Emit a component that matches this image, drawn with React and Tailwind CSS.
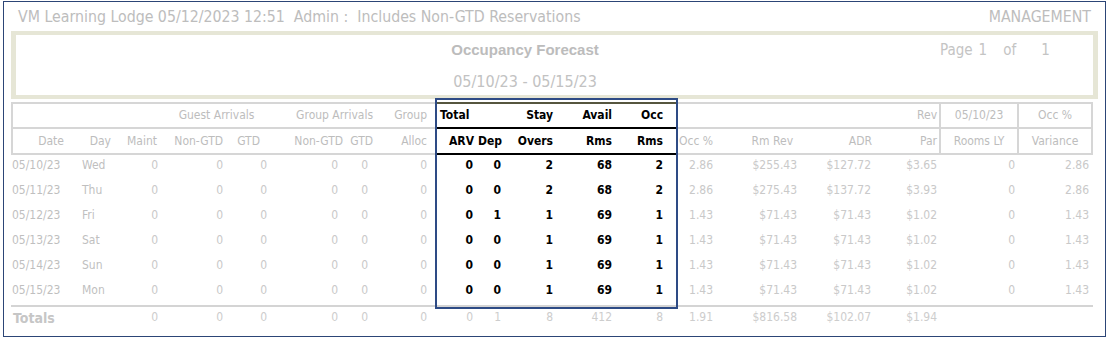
import React from 'react';

const cols = [61, 43, 47, 65, 44, 76, 30, 58, 42, 28, 53, 58, 62, 39, 83, 76, 63, 80, 74];

const rows = [
  ['05/10/23', 'Wed', 0, 0, 0, 0, 0, 0, 0, 0, 2, 68, 2, '2.86', '$255.43', '$127.72', '$3.65', 0, '2.86'],
  ['05/11/23', 'Thu', 0, 0, 0, 0, 0, 0, 0, 0, 2, 68, 2, '2.86', '$275.43', '$137.72', '$3.93', 0, '2.86'],
  ['05/12/23', 'Fri', 0, 0, 0, 0, 0, 0, 0, 1, 1, 69, 1, '1.43', '$71.43', '$71.43', '$1.02', 0, '1.43'],
  ['05/13/23', 'Sat', 0, 0, 0, 0, 0, 0, 0, 0, 1, 69, 1, '1.43', '$71.43', '$71.43', '$1.02', 0, '1.43'],
  ['05/14/23', 'Sun', 0, 0, 0, 0, 0, 0, 0, 0, 1, 69, 1, '1.43', '$71.43', '$71.43', '$1.02', 0, '1.43'],
  ['05/15/23', 'Mon', 0, 0, 0, 0, 0, 0, 0, 0, 1, 69, 1, '1.43', '$71.43', '$71.43', '$1.02', 0, '1.43'],
];

const totals = ['Totals', '', 0, 0, 0, 0, 0, 0, 0, 1, 8, 412, 8, '1.91', '$816.58', '$102.07', '$1.94', '', ''];

// padding per column for data cells
const dataPad = [
  'text-left pl-[1px]', 'text-left pl-[10px]', 'text-right pr-[4px]', 'text-right pr-[4px]', 'text-right pr-[4px]',
  'text-right pr-[9px]', 'text-right pr-[9px]', 'text-right pr-[8px]', 'text-right pr-[4px]', 'text-right pr-[4px]',
  'text-right pr-[5px]', 'text-right pr-[4px]', 'text-right pr-[15px]', 'text-right pr-[4px]', 'text-right pr-[3px]',
  'text-right pr-[5px]', 'text-right pr-[2px]', 'text-right pr-[4px]', 'text-right pr-[4px]',
];

const inBox = (i) => i >= 8 && i <= 12;

const h2 = [
  ['Date', 'text-right pr-[8px] border-l-2'],
  ['Day', 'text-right pr-[4px]'],
  ['Maint', 'text-right pr-[5px]'],
  ['Non-GTD', 'text-right pr-[4px]'],
  ['GTD', 'text-right pr-[11px]'],
  ['Non-GTD', 'text-right pr-[4px]'],
  ['GTD', 'text-right pr-[4px]'],
  ['Alloc', 'text-right pr-[8px]'],
  ['ARV', 'text-right pr-[3px]'],
  ['Dep', 'text-left pl-[1px]'],
  ['Overs', 'text-right pr-[5px]'],
  ['Rms', 'text-right pr-[4px]'],
  ['Rms', 'text-right pr-[15px]'],
  ['Occ %', 'text-right pr-[4px]'],
  ['Rm Rev', 'text-right pr-[7px]'],
  ['ADR', 'text-right pr-[4px]'],
  ['Par', 'text-right pr-[2px]'],
  ['Rooms LY', 'text-center border-x-2'],
  ['Variance', 'text-center border-r-2'],
];

const App = () => {
  return (
    <div className="ml-[3px] mt-[1px] w-[1103px] h-[336px] border border-[#2c4576] bg-white font-['DejaVu_Sans_Condensed','DejaVu_Sans',sans-serif] text-[#bdbdbd]">
      {/* Top line */}
      <div className="h-[29px] flex items-center justify-between pl-[14px] pr-[14px] text-[15.75px]">
        <span className="whitespace-pre">VM Learning Lodge 05/12/2023 12:51  Admin :  Includes Non-GTD Reservations</span>
        <span>MANAGEMENT</span>
      </div>

      {/* Report title box */}
      <div className="ml-[7px] w-[1087px] h-[68px] border-y-4 border-x-[5px] border-[#e6e6d6] flex">
        <div className="ml-[359px] w-[300px] flex flex-col items-center">
          <div className="mt-[6px] leading-[18px] text-[15px] font-bold font-['Liberation_Sans',Arial,sans-serif] text-[#bcbcbc]">
            Occupancy Forecast
          </div>
          <div className="mt-[13px] leading-[20px] text-[16px] text-[#c2c2c2]">05/10/23 - 05/15/23</div>
        </div>
        <div className="ml-[265px] mt-[6px] leading-[18px] text-[15px] flex text-[#c4c4c4]">
          <span>Page</span>
          <span className="ml-[6px]">1</span>
          <span className="ml-[16px]">of</span>
          <span className="ml-[25px]">1</span>
        </div>
      </div>

      {/* Table */}
      <div className="relative ml-[7px] mt-[3px] w-[1082px]">
        <table className="table-fixed border-separate border-spacing-0 w-[1082px] text-[12px] leading-[15px]">
          <colgroup>
            {cols.map((w, i) => (
              <col key={i} style={{ width: w }} />
            ))}
          </colgroup>
          <thead>
            <tr className="h-[27px]">
              <th colSpan={3} className="border-y-2 border-l-2 border-[#d6d6d6]" />
              <th colSpan={2} className="border-y-2 border-[#d6d6d6] font-normal text-center">Guest Arrivals</th>
              <th colSpan={2} className="border-y-2 border-[#d6d6d6] font-normal text-right pr-[4px]">Group Arrivals</th>
              <th className="border-y-2 border-[#d6d6d6] font-normal text-right pr-[8px]">Group</th>
              <th colSpan={2} className="border-t-2 border-t-[#56563f] border-b-2 border-b-black font-bold text-black text-left pl-[5px]">Total</th>
              <th className="border-t-2 border-t-[#56563f] border-b-2 border-b-black font-bold text-black text-right pr-[5px]">Stay</th>
              <th className="border-t-2 border-t-[#56563f] border-b-2 border-b-black font-bold text-black text-right pr-[4px]">Avail</th>
              <th className="border-t-2 border-t-[#56563f] border-b-2 border-b-black font-bold text-black text-right pr-[15px]">Occ</th>
              <th colSpan={3} className="border-y-2 border-[#d6d6d6]" />
              <th className="border-y-2 border-[#d6d6d6] font-normal text-right pr-[2px]">Rev</th>
              <th className="border-2 border-[#d6d6d6] font-normal text-center">05/10/23</th>
              <th className="border-y-2 border-r-2 border-[#d6d6d6] font-normal text-center">Occ %</th>
            </tr>
            <tr className="h-[26px]">
              {h2.map(([label, cls], i) => (
                <th
                  key={i}
                  className={`border-b-2 ${inBox(i) ? 'border-black font-bold text-black' : 'border-[#d6d6d6] font-normal'} ${cls}`}
                >
                  {label}
                </th>
              ))}
            </tr>
          </thead>
          <tbody>
            {rows.map((r, ri) => (
              <tr key={ri}>
                {r.map((v, i) => (
                  <td
                    key={i}
                    className={`h-[25px] align-top pt-[3px] whitespace-nowrap ${dataPad[i]} ${
                      inBox(i) ? 'font-bold text-black' : i < 2 ? 'text-[#bfbfbf]' : 'text-[#c9c9c9]'
                    }`}
                  >
                    {v}
                  </td>
                ))}
              </tr>
            ))}
            <tr>
              {totals.map((v, i) => (
                <td
                  key={i}
                  className={`h-[29px] border-t-2 border-[#d4d4d4] align-top whitespace-nowrap ${
                    i === 0 ? 'pt-[4px] pl-[2px] text-left text-[14px] font-bold text-[#c6c6c6]' : `pt-[3px] text-[#cdcdcd] ${dataPad[i]}`
                  }`}
                >
                  {v}
                </td>
              ))}
            </tr>
          </tbody>
        </table>

        {/* Highlight frame over Total columns */}
        <div className="pointer-events-none absolute left-[424px] top-[-4px] w-[243px] h-[211px] border-2 border-[#2e4b85]" />
      </div>
    </div>
  );
};

export default App;
